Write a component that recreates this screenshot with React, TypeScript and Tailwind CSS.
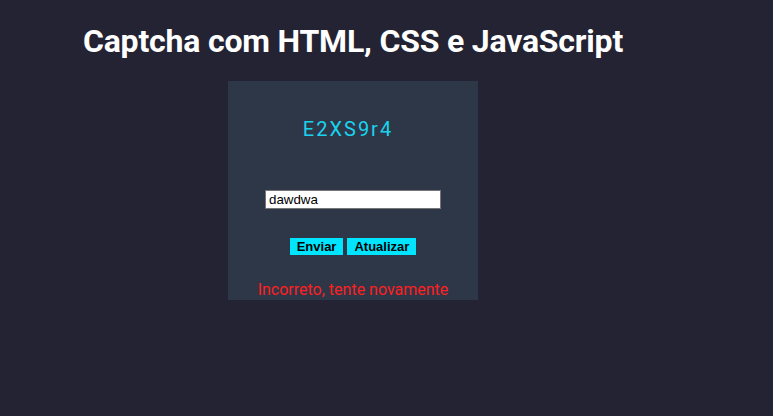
import React, { useState } from "react";

const App = () => {
    const [value, setValue] = useState("dawdwa");

    return (
        <div className="min-h-screen w-full bg-[#242333] font-['Roboto',sans-serif]">
            <div className="w-[706px] flex flex-col items-center">
                <h1 className="text-white font-bold text-[32px] leading-[38px] tracking-[-0.2px] mt-[22px]">
                    Captcha com HTML, CSS e JavaScript
                </h1>
                <div className="w-[250px] h-[219px] mt-[21px] bg-[#2e3748] flex flex-col items-center overflow-hidden">
                    <div className="mt-[36px] mr-[10px] text-[#19d3ee] text-[20px] leading-[24px] tracking-[2px]">
                        E2XS9r4
                    </div>
                    <input
                        className="mt-[49px] w-[176px] h-[22px] bg-white border border-[#767676] px-[3px] text-[13.33px] text-black font-['Liberation_Sans',Arial,sans-serif] outline-none"
                        type="text"
                        value={value}
                        onChange={(e) => setValue(e.target.value)}
                    />
                    <div className="mt-[29px] flex gap-[4px]">
                        <button className="h-[17px] px-[7px] bg-[#00e5ff] text-black font-bold text-[13px] leading-[17px] font-['Liberation_Sans',Arial,sans-serif]">
                            Enviar
                        </button>
                        <button className="h-[17px] px-[7px] bg-[#00e5ff] text-black font-bold text-[13px] leading-[17px] font-['Liberation_Sans',Arial,sans-serif]">
                            Atualizar
                        </button>
                    </div>
                    <p className="mt-[25px] text-[#ff1f1f] text-[16px] leading-[20px]">
                        Incorreto, tente novamente
                    </p>
                </div>
            </div>
        </div>
    );
};

export default App;
